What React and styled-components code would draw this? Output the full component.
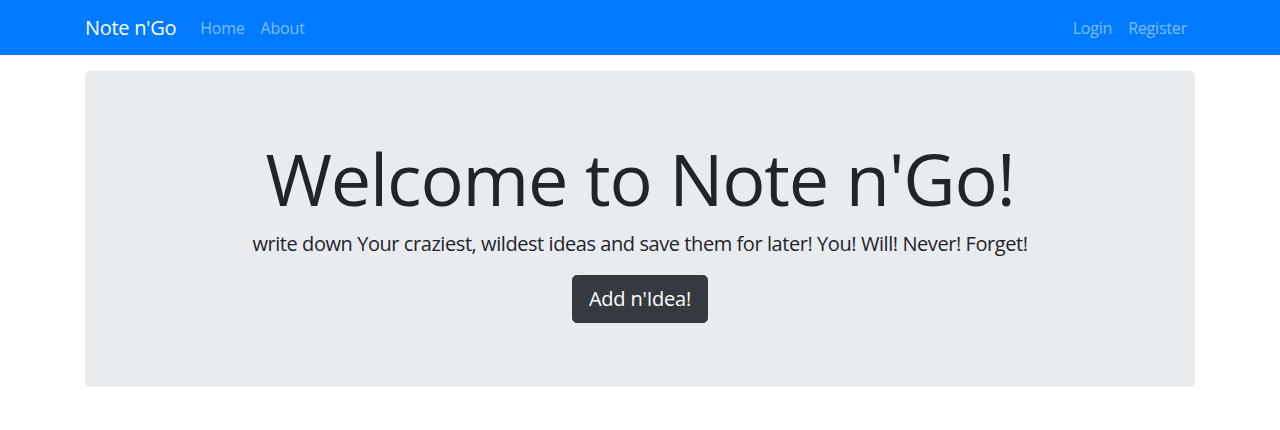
import React from "react";
import styled, { createGlobalStyle } from "styled-components";

const GlobalStyle = createGlobalStyle`
  * {
    box-sizing: border-box;
  }
  body {
    margin: 0;
    font-family: "Open Sans", "Noto Sans", Roboto, Arial, sans-serif;
    font-size: 16px;
    line-height: 1.5;
    color: #212529;
    background-color: #fff;
  }
`;

const Navbar = styled.nav`
  background-color: #007bff;
  height: 55px;
`;

const NavContainer = styled.div`
  width: 1140px;
  margin: 0 auto;
  padding: 0 15px;
  height: 100%;
  display: flex;
  align-items: center;
`;

const Brand = styled.a`
  font-size: 20px;
  line-height: 30px;
  letter-spacing: -0.3px;
  color: #fff;
  margin-right: 16px;
  text-decoration: none;
`;

const NavList = styled.ul`
  display: flex;
  list-style: none;
  margin: 0;
  padding: 0;
  margin-left: ${(p) => (p.$right ? "auto" : "0")};
`;

const NavLink = styled.a`
  display: block;
  padding: 8px;
  letter-spacing: -0.2px;
  color: rgba(255, 255, 255, 0.5);
  text-decoration: none;
  cursor: pointer;
`;

const Container = styled.div`
  width: 1140px;
  margin: 0 auto;
  padding: 0 15px;
`;

const Jumbotron = styled.div`
  margin-top: 16px;
  padding: 64px 32px;
  background-color: #e9ecef;
  border-radius: 4.8px;
  text-align: center;
`;

const Title = styled.h1`
  font-size: 72px;
  font-weight: 400;
  letter-spacing: -1.15px;
  line-height: 1.2;
  margin: 0 0 8px;
`;

const Lead = styled.p`
  font-size: 20px;
  font-weight: 400;
  letter-spacing: -0.43px;
  margin: 0 0 16px;
`;

const Button = styled.a`
  display: inline-block;
  padding: 8px 16px;
  font-size: 20px;
  line-height: 1.5;
  letter-spacing: -0.2px;
  border: 1px solid #343a40;
  border-radius: 4.8px;
  background-color: #343a40;
  color: #fff;
  text-decoration: none;
  cursor: pointer;
`;

const App = () => {
  return (
    <>
      <GlobalStyle />
      <Navbar>
        <NavContainer>
          <Brand href="#">Note n'Go</Brand>
          <NavList>
            <li><NavLink>Home</NavLink></li>
            <li><NavLink>About</NavLink></li>
          </NavList>
          <NavList $right>
            <li><NavLink>Login</NavLink></li>
            <li><NavLink>Register</NavLink></li>
          </NavList>
        </NavContainer>
      </Navbar>
      <Container>
        <Jumbotron>
          <Title>Welcome to Note n'Go!</Title>
          <Lead>
            write down Your craziest, wildest ideas and save them for later! You! Will! Never! Forget!
          </Lead>
          <Button>Add n'Idea!</Button>
        </Jumbotron>
      </Container>
    </>
  );
};

export default App;
